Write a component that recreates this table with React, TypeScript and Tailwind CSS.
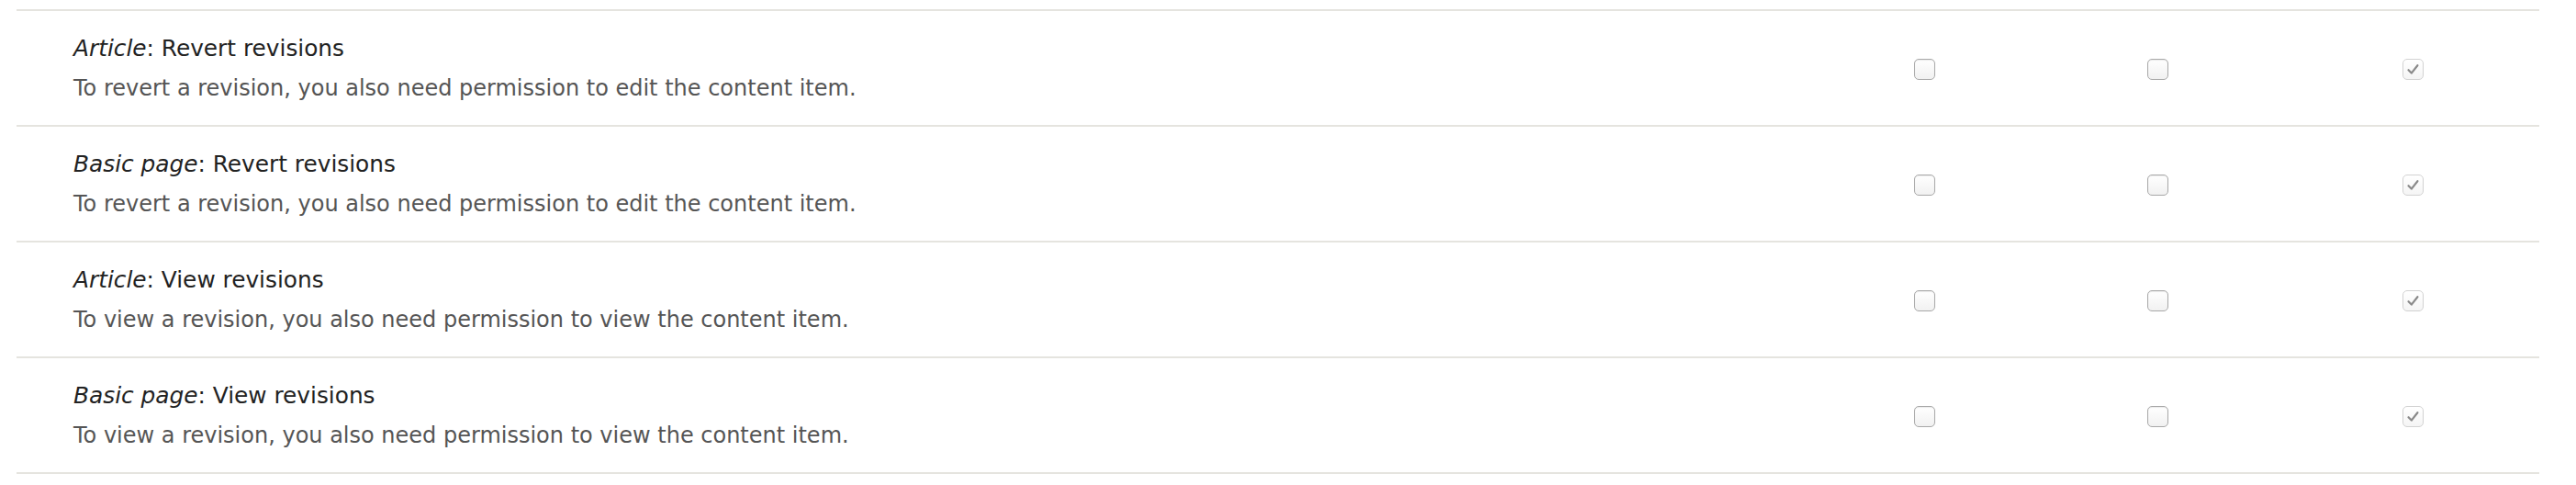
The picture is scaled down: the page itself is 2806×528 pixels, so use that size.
import React from "react";

type Row = {
  type: string;
  action: string;
  description: string;
};

const rows: Row[] = [
  {
    type: "Article",
    action: "Revert revisions",
    description: "To revert a revision, you also need permission to edit the content item.",
  },
  {
    type: "Basic page",
    action: "Revert revisions",
    description: "To revert a revision, you also need permission to edit the content item.",
  },
  {
    type: "Article",
    action: "View revisions",
    description: "To view a revision, you also need permission to view the content item.",
  },
  {
    type: "Basic page",
    action: "View revisions",
    description: "To view a revision, you also need permission to view the content item.",
  },
];

function Checkbox({ checked = false }: { checked?: boolean }) {
  if (checked) {
    return (
      <span className="flex h-[23px] w-[23px] items-center justify-center rounded-[5px] border border-[#d2d2d2] bg-gradient-to-b from-[#ffffff] to-[#f5f5f5]">
        <svg width="15" height="15" viewBox="0 0 15 15" fill="none">
          <path
            d="M2.5 8.2 L5.8 11.6 L12.4 3.2"
            stroke="#8a8a8a"
            strokeWidth="2.2"
            strokeLinecap="round"
            strokeLinejoin="round"
          />
        </svg>
      </span>
    );
  }
  return (
    <span className="block h-[23px] w-[23px] rounded-[5px] border border-[#a8a8a8] bg-gradient-to-b from-[#ffffff] to-[#f1f1f1] shadow-[inset_0_1px_1px_rgba(0,0,0,0.08)]" />
  );
}

export default function App() {
  return (
    <div className="h-[528px] w-[2806px] bg-white pt-[10px] font-['DejaVu_Sans',sans-serif]">
      <div className="ml-[18px] w-[2748px] border-t-2 border-[#e5e4df]">
        {rows.map((row, i) => (
          <div
            key={i}
            className="grid h-[126px] grid-cols-[1fr_228px_280px_276px] items-center border-b-2 border-[#e5e4df]"
          >
            {/* permission label */}
            <div className="flex flex-col gap-[13px] pl-[62px]">
              <p className="text-[24.8px] leading-[31px] text-[#222222]">
                <em>{row.type}</em>: {row.action}
              </p>
              <p className="text-[24px] leading-[31px] text-[#555555]">{row.description}</p>
            </div>
            <div className="flex justify-center pt-[2px]">
              <Checkbox />
            </div>
            <div className="flex justify-center pt-[2px]">
              <Checkbox />
            </div>
            <div className="flex justify-center pt-[2px]">
              <Checkbox checked />
            </div>
          </div>
        ))}
      </div>
    </div>
  );
}
